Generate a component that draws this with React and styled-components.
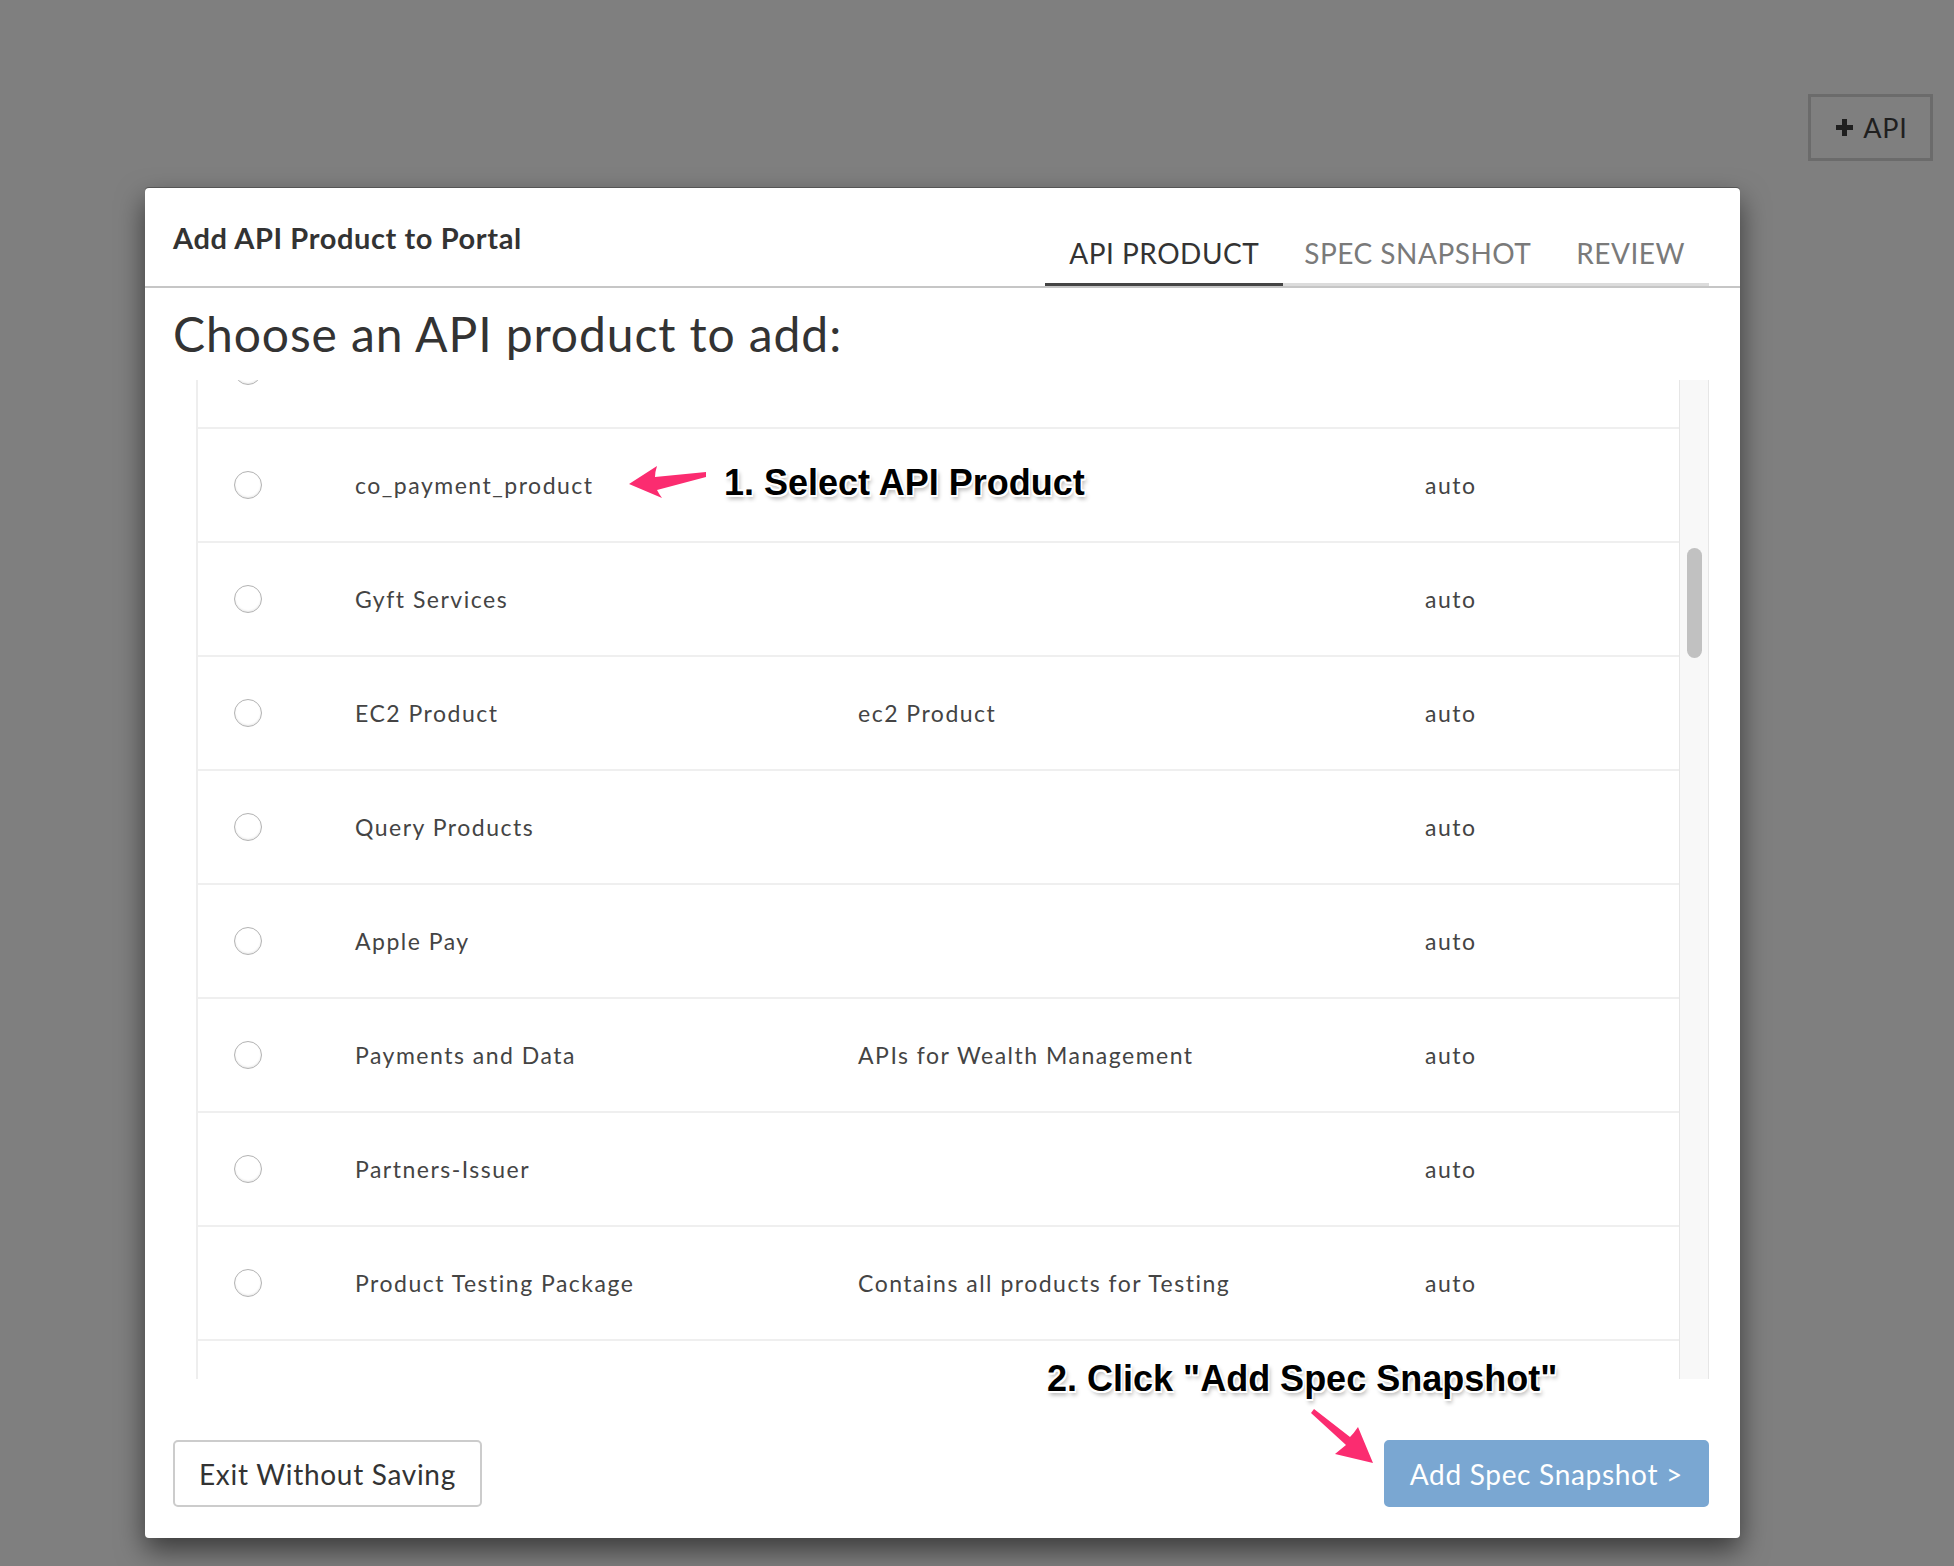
import React from "react";
import styled, { createGlobalStyle } from "styled-components";

const GlobalStyle = createGlobalStyle`
  html, body {
    margin: 0;
    padding: 0;
    background: #7f7f7f;
    font-family: Lato, "Open Sans", sans-serif;
  }
`;

const Page = styled.div`
  position: relative;
  width: 1954px;
  height: 1566px;
  overflow: hidden;
  background: #7f7f7f;
`;

const TopBar = styled.div`
  display: flex;
  justify-content: flex-end;
  padding: 94px 21px 0 0;
`;

const ApiButton = styled.button`
  display: flex;
  align-items: center;
  justify-content: center;
  gap: 9px;
  width: 125px;
  height: 67px;
  box-sizing: border-box;
  border: 3px solid #6b6b6b;
  background: transparent;
  color: #1f1f1f;
  font-family: Lato, sans-serif;
  font-size: 27px;
  letter-spacing: 0.8px;
  padding: 0 0 0 2px;
`;

const Overlay = styled.div`
  position: absolute;
  inset: 0;
  padding: 188px 0 0 145px;
`;

const Modal = styled.div`
  position: relative;
  width: 1595px;
  height: 1350px;
  box-sizing: border-box;
  background: #fff;
  border-radius: 4px;
  box-shadow: 0 -1px 0 #555, 0 12px 28px rgba(0, 0, 0, 0.55);
  display: flex;
  flex-direction: column;
`;

const Header = styled.div`
  display: flex;
  justify-content: space-between;
  align-items: flex-start;
  height: 98px;
  padding: 0 31px 0 28px;
  border-bottom: 2px solid #c6c6c6;
`;

const Title = styled.h2`
  margin: 32px 0 0;
  font-family: Lato, sans-serif;
  font-weight: 700;
  font-size: 29px;
  line-height: 36px;
  letter-spacing: 0.6px;
  color: #333;
`;

const Tabs = styled.div`
  display: flex;
  align-self: flex-end;
`;

const Tab = styled.div`
  padding: 0 ${(p) => p.$pad}px 13px;
  font-family: Lato, sans-serif;
  font-size: 28px;
  line-height: 34px;
  letter-spacing: 0.5px;
  color: ${(p) => (p.$active ? "#333" : "#7a7a7a")};
  border-bottom: 3px solid ${(p) => (p.$active ? "#444" : "#dcdcdc")};
`;

const Body = styled.div`
  flex: 1;
  display: flex;
  flex-direction: column;
  padding: 0 31px 31px 28px;
`;

const Heading = styled.h1`
  margin: 18px 0 18px;
  font-family: Lato, sans-serif;
  font-weight: 400;
  font-size: 48px;
  line-height: 56px;
  letter-spacing: 0.9px;
  color: #333;
`;

const ListFrame = styled.div`
  display: flex;
  height: 999px;
  margin-left: 23px;
`;

const Rows = styled.div`
  flex: 1;
  overflow: hidden;
  border-left: 2px solid #eeeeee;
`;

const RowsInner = styled.div`
  margin-top: -65px;
`;

const Row = styled.div`
  display: grid;
  grid-template-columns: 157px 503px 567px 1fr;
  align-items: center;
  height: 112px;
  border-bottom: 2px solid #efefef;
  font-family: Lato, sans-serif;
  font-size: 23px;
  letter-spacing: 1.5px;
  color: #444;
`;

const Radio = styled.span`
  display: block;
  width: 26px;
  height: 26px;
  margin-left: 36px;
  border-radius: 50%;
  border: 1.5px solid #b3b3b3;
  box-shadow: inset 0 -1px 2px rgba(0, 0, 0, 0.1);
  background: #fff;
`;

const Track = styled.div`
  width: 28px;
  border-left: 1px solid #e6e6e6;
  border-right: 1px solid #e6e6e6;
  background: #f8f8f8;
  display: flex;
  justify-content: center;
`;

const Thumb = styled.div`
  width: 15px;
  height: 110px;
  margin-top: 168px;
  border-radius: 8px;
  background: #c1c1c1;
`;

const Footer = styled.div`
  display: flex;
  justify-content: space-between;
  align-items: flex-end;
  margin-top: auto;
`;

const Button = styled.button`
  height: 67px;
  box-sizing: border-box;
  padding: 0 24px;
  border-radius: 5px;
  font-family: Lato, sans-serif;
  font-size: 28px;
  letter-spacing: 0.7px;
  border: 2px solid ${(p) => (p.$primary ? "#7aa7d2" : "#cccccc")};
  background: ${(p) => (p.$primary ? "#7aa7d2" : "#fff")};
  color: ${(p) => (p.$primary ? "#fff" : "#333")};
`;

const Callout = styled.div`
  position: absolute;
  left: ${(p) => p.$x}px;
  top: ${(p) => p.$y}px;
  font-family: "Liberation Sans", Arial, sans-serif;
  font-weight: 700;
  font-size: 36px;
  line-height: 40px;
  color: #000;
  white-space: nowrap;
  text-shadow: -1.5px -1.5px 0 #fff, 1.5px -1.5px 0 #fff, -1.5px 1.5px 0 #fff,
    1.5px 1.5px 0 #fff, 0 -2px 0 #fff, 0 2px 0 #fff, 2px 4px 4px rgba(0, 0, 0, 0.3);
`;

const Arrow = styled.svg`
  position: absolute;
  left: ${(p) => p.$x}px;
  top: ${(p) => p.$y}px;
`;

// the first and last entries are scrolled mostly out of view
const products = [
  { name: "", desc: "", mode: "" },
  { name: "co_payment_product", desc: "", mode: "auto" },
  { name: "Gyft Services", desc: "", mode: "auto" },
  { name: "EC2 Product", desc: "ec2 Product", mode: "auto" },
  { name: "Query Products", desc: "", mode: "auto" },
  { name: "Apple Pay", desc: "", mode: "auto" },
  { name: "Payments and Data", desc: "APIs for Wealth Management", mode: "auto" },
  { name: "Partners-Issuer", desc: "", mode: "auto" },
  { name: "Product Testing Package", desc: "Contains all products for Testing", mode: "auto" },
  { name: "", desc: "", mode: "" },
];

export default function App() {
  return (
    <>
      <GlobalStyle />
      <Page>
        <TopBar>
          <ApiButton>
            <svg width="19" height="19" viewBox="0 0 19 19">
              <path d="M9.5 1v17M1 9.5h17" stroke="#1f1f1f" strokeWidth="5" />
            </svg>
            API
          </ApiButton>
        </TopBar>
        <Overlay>
          <Modal>
            <Header>
              <Title>Add API Product to Portal</Title>
              <Tabs>
                <Tab $active $pad={24}>API PRODUCT</Tab>
                <Tab $pad={21}>SPEC SNAPSHOT</Tab>
                <Tab $pad={24}>REVIEW</Tab>
              </Tabs>
            </Header>
            <Body>
              <Heading>Choose an API product to add:</Heading>
              <ListFrame>
                <Rows>
                  <RowsInner>
                    {products.map((p, i) => (
                      <Row key={i}>
                        <Radio />
                        <span>{p.name}</span>
                        <span>{p.desc}</span>
                        <span>{p.mode}</span>
                      </Row>
                    ))}
                  </RowsInner>
                </Rows>
                <Track>
                  <Thumb />
                </Track>
              </ListFrame>
              <Footer>
                <Button>Exit Without Saving</Button>
                <Button $primary>Add Spec Snapshot &gt;</Button>
              </Footer>
            </Body>
          </Modal>
        </Overlay>
        <Arrow $x={620} $y={460} width="90" height="45" viewBox="0 0 90 45">
          <path
            d="M9 24 L37 6 Q35 12 35 17 L86 12 L86 17 L37 30 Q39 34 42 38 Z"
            fill="#fb2c70"
          />
        </Arrow>
        <Callout $x={724} $y={463}>1. Select API Product</Callout>
        <Callout $x={1047} $y={1359}>2. Click "Add Spec Snapshot"</Callout>
        <Arrow $x={1300} $y={1400} width="80" height="70" viewBox="0 0 80 70">
          <path
            d="M11 13 L14 9 L50 37 Q54 33 58 27 L73 63 L35 54 Q41 49 46 45 Z"
            fill="#fb2c70"
          />
        </Arrow>
      </Page>
    </>
  );
}
